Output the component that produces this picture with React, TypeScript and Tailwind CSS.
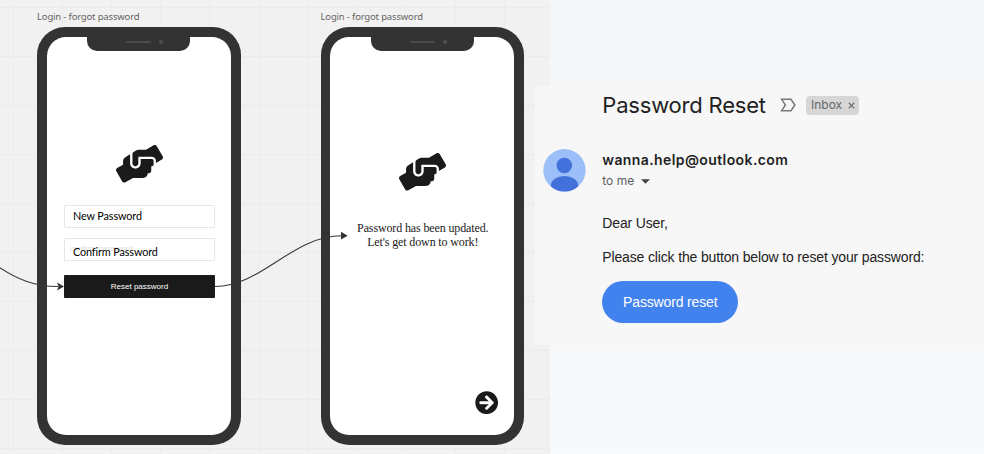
import type { ReactNode } from "react";
import { FaArrowCircleRight, FaHandsHelping } from "react-icons/fa";

function Phone({ label, children }: { label: string; children: ReactNode }) {
  return (
    <div className="w-[203.5px] shrink-0 pt-[9px]">
      <div className="h-[18px] whitespace-nowrap font-['Noto_Sans',sans-serif] text-[9.5px] leading-[16px] tracking-[-0.17px] text-[#666]">
        {label}
      </div>
      <div className="h-[417.5px] rounded-[28px] bg-[#333] p-[9.6px]">
        <div className="flex h-full flex-col rounded-[19px] bg-white">
          <div className="mx-auto -mt-px flex h-[15.5px] w-[103px] shrink-0 items-start rounded-b-[10px] bg-[#333] pt-[4.5px] pl-[39px]">
            <div className="mt-px h-[2px] w-[25px] rounded-full bg-[#4b4b4b]" />
            <div className="ml-[8px] h-[4px] w-[4px] rounded-full bg-[#505050]" />
          </div>
          {children}
        </div>
      </div>
    </div>
  );
}

function Field({ label, ghost, className }: { label: string; ghost?: string; className: string }) {
  return (
    <div className={`relative h-[23px] rounded-[1px] border border-[#e6e6e6] bg-white pl-[8px] ${className}`}>
      {ghost && (
        <span className="absolute top-[5px] left-[5px] font-['Liberation_Sans',sans-serif] text-[8px] leading-[10px] text-[#dedede]">
          {ghost}
        </span>
      )}
      <span className="relative block whitespace-nowrap font-['Lato',sans-serif] text-[10.8px] leading-[14px] tracking-[-0.1px] text-black">
        {label}
      </span>
    </div>
  );
}

function Connectors() {
  return (
    <svg className="absolute inset-0" width="550" height="454" fill="none" stroke="#3a3a3a" strokeWidth="1.1">
      <path d="M-2 266.5C17 279 34 286.5 58 286.5" />
      <path d="M215 286.5C262 286.5 292 235.8 342 235.8" />
      <path d="M57 282.6 64 286.5 57 290.4 58.5 286.5z" fill="#333" stroke="none" />
      <path d="M341 231.8 347.7 235.7 341 239.6z" fill="#333" stroke="none" />
    </svg>
  );
}

function Avatar() {
  return (
    <svg className="shrink-0" width="43" height="43" viewBox="0 0 43 43">
      <defs>
        <clipPath id="avatar">
          <circle cx="21.5" cy="21.3" r="21.2" />
        </clipPath>
      </defs>
      <g clipPath="url(#avatar)">
        <rect width="43" height="43" fill="#9dbff9" />
        <circle cx="21.3" cy="16.5" r="7.8" fill="#4371db" />
        <ellipse cx="21.5" cy="36.2" rx="13.6" ry="9.2" fill="#4371db" />
      </g>
    </svg>
  );
}

export default function App() {
  return (
    <div className="flex h-[454px] w-[984px] overflow-hidden bg-linear-to-b from-[#f4f6f8] to-[#f8f9fb]">
      <div className="relative flex w-[550px] shrink-0 gap-[80px] bg-[#f1f1f1] bg-[linear-gradient(to_right,#ebebeb_1px,transparent_1px),linear-gradient(to_bottom,#ebebeb_1px,transparent_1px)] bg-[size:49.1px_49px] bg-[position:13px_7px] pl-[37px]">
        <Phone label="Login - forgot password">
          <FaHandsHelping className="mt-[94px] ml-[69px] h-[37.6px] w-[47px] text-[#1a1a1a]" />
          <div className="mt-[22.4px] ml-[17.4px] w-[151px]">
            <Field label="New Password" className="pt-[3px]" />
            <Field label="Confirm Password" ghost="confirm password" className="mt-[10px] pt-[6px]" />
            <div className="mt-[14px] flex h-[23px] items-center justify-center rounded-[1px] bg-[#1a1a1a] font-['Liberation_Sans',sans-serif] text-[8px] text-white">
              Reset password
            </div>
          </div>
        </Phone>
        <Phone label="Login - forgot password">
          <FaHandsHelping className="mt-[102px] ml-[69px] h-[37.6px] w-[47px] text-[#1a1a1a]" />
          <div className="mt-[30.4px] ml-[1px] text-center font-['Liberation_Serif',serif] text-[12px] leading-[14px] tracking-[-0.13px] whitespace-nowrap text-[#1a1a1a]">
            Password has been updated.
            <br />
            Let's get down to work!
          </div>
          <FaArrowCircleRight className="mt-auto mr-[16.5px] mb-[20.5px] ml-auto h-[23.4px] w-[23.4px] text-[#1a1a1a]" />
        </Phone>
        <Connectors />
      </div>
      <div className="z-10 mt-[86px] -ml-[15px] flex h-[259px] w-[449px] shrink-0 bg-[#f7f7f7] pl-[8px]">
        <div className="w-[59.3px] shrink-0 pt-[63px]">
          <Avatar />
        </div>
        <div className="whitespace-nowrap">
          <div className="flex h-[38px] items-center">
            <h1 className="w-[177.7px] font-['Inter',sans-serif] text-[22px] leading-[28px] tracking-[-0.2px] text-[#1f1f1f]">
              Password Reset
            </h1>
            <svg width="16" height="14" viewBox="0 0 16 14" fill="none" stroke="#777" strokeWidth="1.5">
              <path d="M1.7 1.3H11L14.9 7 11 12.7H1.7L5.4 7z" />
            </svg>
            <div className="ml-[10px] flex h-[19px] w-[53px] items-center rounded-[4px] bg-[#d6d6d6] pl-[5px] font-['Inter',sans-serif] text-[12px] text-[#666]">
              <span className="w-[37px]">Inbox</span>
              <svg className="mt-px" width="7" height="7" viewBox="0 0 7 7" stroke="#666" strokeWidth="1.2">
                <path d="M.7.7 6.3 6.3M6.3.7.7 6.3" />
              </svg>
            </div>
          </div>
          <div className="mt-[26px] font-['Inter',sans-serif] text-[14px] leading-[20px] font-semibold tracking-[0.4px] text-[#1f1f1f]">
            wanna.help@outlook.com
          </div>
          <div className="mt-[1px] flex items-center font-['Inter',sans-serif] text-[12px] leading-[20px] text-[#5e5e5e]">
            <span className="w-[38.5px]">to me</span>
            <svg width="9" height="5" viewBox="0 0 9 5">
              <path d="M0 .3H9L4.5 4.8z" fill="#444" />
            </svg>
          </div>
          <div className="mt-[22px] font-['Liberation_Sans',sans-serif] text-[14px] leading-[20px] tracking-[-0.15px] text-[#222]">
            Dear User,
          </div>
          <div className="mt-[14px] font-['Liberation_Sans',sans-serif] text-[14px] leading-[20px] tracking-[-0.15px] text-[#222]">
            Please click the button below to reset your password:
          </div>
          <button className="mt-[14px] flex h-[42px] w-[136px] items-center justify-center rounded-full bg-[#4282ee] font-['Liberation_Sans',sans-serif] text-[14px] tracking-[-0.15px] text-white">
            Password reset
          </button>
        </div>
      </div>
    </div>
  );
}
